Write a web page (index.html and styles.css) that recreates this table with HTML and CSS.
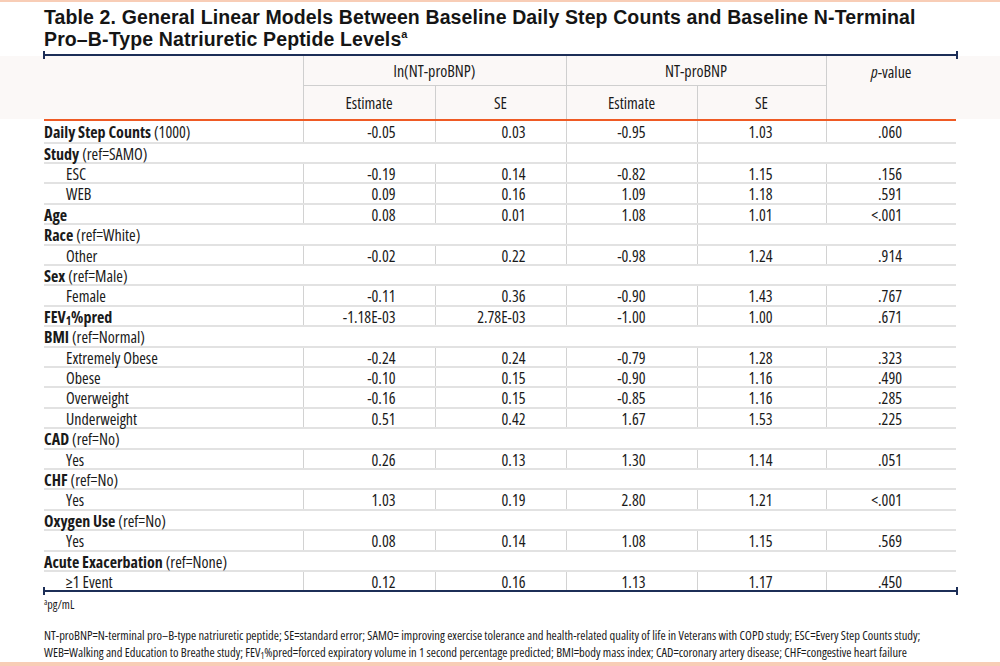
FILE: index.html
```html
<!DOCTYPE html>
<html lang="en">
<head>
<meta charset="utf-8">
<title>Table 2</title>
<link rel="stylesheet" href="styles.css">
</head>
<body>
<div class="page">
  <h1 class="title">Table 2. General Linear Models Between Baseline Daily Step Counts and Baseline N-Terminal Pro–B-Type Natriuretic Peptide Levels<sup>a</sup></h1>
  <div class="rule rule-top"></div>
  <div class="table-wrap">
    <table class="data">
      <colgroup>
        <col class="c-label"><col class="c-n1"><col class="c-n2"><col class="c-n3"><col class="c-n4"><col class="c-n5">
      </colgroup>
      <thead>
        <tr class="h1">
          <th rowspan="2" class="blank"></th>
          <th colspan="2">ln(NT-proBNP)</th>
          <th colspan="2">NT-proBNP</th>
          <th rowspan="2" class="pval"><i>p</i>-value</th>
        </tr>
        <tr class="h2">
          <th>Estimate</th><th>SE</th><th>Estimate</th><th>SE</th>
        </tr>
      </thead>
      <tbody>
        <tr class="first"><td><b>Daily Step Counts</b> (1000)</td><td>-0.05</td><td>0.03</td><td>-0.95</td><td>1.03</td><td>.060</td></tr>
        <tr class="cat mid"><td><b>Study</b> (ref=SAMO)</td><td></td><td></td><td></td><td></td><td></td></tr>
        <tr><td class="ind">ESC</td><td>-0.19</td><td>0.14</td><td>-0.82</td><td>1.15</td><td>.156</td></tr>
        <tr><td class="ind">WEB</td><td>0.09</td><td>0.16</td><td>1.09</td><td>1.18</td><td>.591</td></tr>
        <tr><td><b>Age</b></td><td>0.08</td><td>0.01</td><td>1.08</td><td>1.01</td><td>&lt;.001</td></tr>
        <tr class="cat mid"><td><b>Race</b> (ref=White)</td><td></td><td></td><td></td><td></td><td></td></tr>
        <tr><td class="ind">Other</td><td>-0.02</td><td>0.22</td><td>-0.98</td><td>1.24</td><td>.914</td></tr>
        <tr class="cat"><td><b>Sex</b> (ref=Male)</td><td></td><td></td><td></td><td></td><td></td></tr>
        <tr><td class="ind">Female</td><td>-0.11</td><td>0.36</td><td>-0.90</td><td>1.43</td><td>.767</td></tr>
        <tr><td><b>FEV<sub>1</sub>%pred</b></td><td>-1.18E-03</td><td>2.78E-03</td><td>-1.00</td><td>1.00</td><td>.671</td></tr>
        <tr class="cat"><td><b>BMI</b> (ref=Normal)</td><td></td><td></td><td></td><td></td><td></td></tr>
        <tr><td class="ind">Extremely Obese</td><td>-0.24</td><td>0.24</td><td>-0.79</td><td>1.28</td><td>.323</td></tr>
        <tr><td class="ind">Obese</td><td>-0.10</td><td>0.15</td><td>-0.90</td><td>1.16</td><td>.490</td></tr>
        <tr><td class="ind">Overweight</td><td>-0.16</td><td>0.15</td><td>-0.85</td><td>1.16</td><td>.285</td></tr>
        <tr><td class="ind">Underweight</td><td>0.51</td><td>0.42</td><td>1.67</td><td>1.53</td><td>.225</td></tr>
        <tr class="cat"><td><b>CAD</b> (ref=No)</td><td></td><td></td><td></td><td></td><td></td></tr>
        <tr><td class="ind">Yes</td><td>0.26</td><td>0.13</td><td>1.30</td><td>1.14</td><td>.051</td></tr>
        <tr class="cat"><td><b>CHF</b> (ref=No)</td><td></td><td></td><td></td><td></td><td></td></tr>
        <tr><td class="ind">Yes</td><td>1.03</td><td>0.19</td><td>2.80</td><td>1.21</td><td>&lt;.001</td></tr>
        <tr class="cat"><td><b>Oxygen Use</b> (ref=No)</td><td></td><td></td><td></td><td></td><td></td></tr>
        <tr><td class="ind">Yes</td><td>0.08</td><td>0.14</td><td>1.08</td><td>1.15</td><td>.569</td></tr>
        <tr class="cat"><td><b>Acute Exacerbation</b> (ref=None)</td><td></td><td></td><td></td><td></td><td></td></tr>
        <tr class="last"><td class="ind">≥1 Event</td><td>0.12</td><td>0.16</td><td>1.13</td><td>1.17</td><td>.450</td></tr>
      </tbody>
    </table>
  </div>
  <div class="rule rule-bottom"></div>
  <p class="note"><sup>a</sup>pg/mL</p>
  <p class="abbr">NT-proBNP=N-terminal pro–B-type natriuretic peptide; SE=standard error; SAMO= improving exercise tolerance and health-related quality of life in Veterans with COPD study; ESC=Every Step Counts study; WEB=Walking and Education to Breathe study; FEV<sub>1</sub>%pred=forced expiratory volume in 1 second percentage predicted; BMI=body mass index; CAD=coronary artery disease; CHF=congestive heart failure</p>
</div>
</body>
</html>
```

FILE: styles.css
```css
html, body {
  margin: 0;
  padding: 0;
  background: #ffffff;
}

.page {
  width: 1000px;
  height: 666px;
  box-sizing: border-box;
  border-top: 2px solid #f8cdb6;
  border-bottom: 4px solid #f8cdb6;
  color: #1a1a1a;
  font-family: "Open Sans", "Liberation Sans", sans-serif;
  font-stretch: 80%;
  overflow: hidden;
}

.title {
  margin: 0;
  padding: 4px 40px 0 44px;
  max-width: 890px;
  font-family: "Liberation Sans", Arial, sans-serif;
  font-stretch: normal;
  font-weight: bold;
  font-size: 19.5px;
  letter-spacing: 0.12px;
  line-height: 22px;
  color: #151515;
}

.title sup {
  font-size: 11px;
  line-height: 0;
  vertical-align: 8px;
}

.rule {
  position: relative;
  margin: 0 42px 0 43px;
  height: 2px;
  background: #1c2e57;
}

.rule::before,
.rule::after {
  content: "";
  position: absolute;
  top: -3px;
  width: 2px;
  height: 8px;
  background: #1c2e57;
}

.rule::before { left: 0; }
.rule::after { right: 0; }

.rule-top {
  margin-top: 4px;
}

.table-wrap {
  padding: 0 44px;
  background: linear-gradient(#fbf8f7 0, #fbf8f7 63px, #ffffff 63px);
}

.data {
  width: 912px;
  border-collapse: collapse;
  table-layout: fixed;
  font-size: 16px;
}

.data b {
  font-stretch: 76%;
}

.c-label { width: 259px; }
.c-n1 { width: 132px; }
.c-n2 { width: 131px; }
.c-n3 { width: 131px; }
.c-n4 { width: 129px; }
.c-n5 { width: 130px; }

.data th {
  font-weight: normal;
  padding: 0;
  text-align: center;
  vertical-align: middle;
  border-left: 1px solid #cfcfcf;
}

.data th.blank {
  border-left: none;
}

.data .h1 th {
  height: 29px;
  border-bottom: 1px solid #cfcfcf;
}

.data .h1 th.pval {
  vertical-align: top;
  padding-top: 5px;
  border-bottom: 2px solid #ef5a24;
}

.data .h1 th.blank {
  border-bottom: 2px solid #ef5a24;
}

.data .h2 th {
  height: 33px;
  border-bottom: 2px solid #ef5a24;
}

.data td {
  height: 15.4px;
  padding: 3px 0 0;
  line-height: 15.4px;
  text-align: right;
  white-space: nowrap;
  vertical-align: top;
  border-left: 1px solid #d2d2d2;
  border-bottom: 2px solid #e2e2e2;
}

.data tr.first td {
  height: 17.5px;
  padding-top: 3px;
  line-height: 17.5px;
}

.data td:first-child {
  text-align: left;
  border-left: none;
}

.data td.ind {
  padding-left: 22px;
}

.data td:nth-child(2) { padding-right: 39px; }
.data td:nth-child(3) { padding-right: 40px; }
.data td:nth-child(4) { padding-right: 51px; }
.data td:nth-child(5) { padding-right: 53px; }
.data td:nth-child(6) { padding-right: 54px; }

.data tr.cat td {
  border-left: none;
}

.data tr.cat.mid td:nth-child(4),
.data tr.cat.mid td:nth-child(5) {
  border-left: 1px solid #d2d2d2;
}

.data tr.last td {
  border-bottom: none;
}

.data sub,
.abbr sub {
  font-size: 0.72em;
  line-height: 0;
  vertical-align: -2px;
}

.note {
  margin: 5px 0 0 44px;
  font-size: 12px;
  line-height: 16px;
}

.note sup {
  font-size: 8px;
  line-height: 0;
  vertical-align: 4px;
}

.abbr {
  margin: 14px 60px 0 44px;
  font-size: 12.5px;
  font-stretch: 78%;
  line-height: 17px;
}
```
